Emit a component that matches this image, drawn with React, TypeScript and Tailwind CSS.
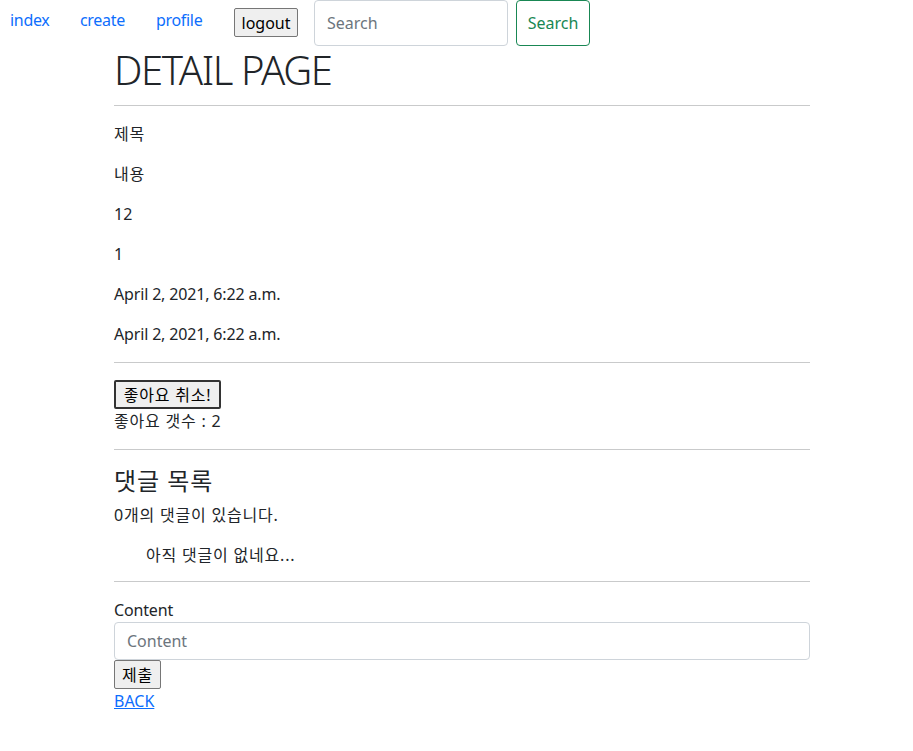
import React from 'react'

const font = { fontFamily: '"Segoe UI", "Noto Sans", "Noto Sans CJK KR", sans-serif' }

export default function App() {
  return (
    <div className="min-h-screen bg-white text-[16px] text-[#212529]" style={font}>
      {/* Top nav */}
      <nav className="flex items-start h-[46px]">
        <a href="#" className="ml-[10px] w-[70px] mt-[8px] leading-6 text-[#0d6efd] tracking-[-0.02em]">index</a>
        <a href="#" className="w-[76px] mt-[8px] leading-6 text-[#0d6efd] tracking-[-0.02em]">create</a>
        <a href="#" className="w-[78px] mt-[8px] leading-6 text-[#0d6efd] tracking-[-0.02em]">profile</a>
        <button className="w-[64px] mt-[8px] h-[29px] bg-[#efefef] border border-[#767676] rounded-[2px] text-black leading-none">
          logout
        </button>
        <input
          placeholder="Search"
          className="ml-[16px] w-[194px] h-[46px] px-3 border border-[#ced4da] rounded-[4px] placeholder:text-[#6c757d] outline-none"
        />
        <button className="ml-[8px] w-[74px] h-[46px] border border-[#198754] rounded-[4px] text-[#198754]">
          Search
        </button>
      </nav>

      <main className="ml-[114px] w-[696px]">
        <h1 className="text-[40px] leading-[48px] font-light tracking-[-0.035em]">DETAIL PAGE</h1>
        <hr className="mt-[11px] mb-4 border-t border-[#c9cacb]" />

        <p className="leading-6 mb-4 tracking-[0.05em]">제목</p>
        <p className="leading-6 mb-4 tracking-[0.05em]">내용</p>
        <p className="leading-6 mb-4">12</p>
        <p className="leading-6 mb-4">1</p>
        <p className="leading-6 mb-4 tracking-[-0.01em]">April 2, 2021, 6:22 a.m.</p>
        <p className="leading-6 mb-4 tracking-[-0.01em]">April 2, 2021, 6:22 a.m.</p>
        <hr className="mb-4 border-t border-[#c9cacb]" />

        <div>
          <button className="h-[29px] w-[107px] bg-[#efefef] border-2 border-[#333] rounded-[2px] text-black leading-none mt-px tracking-[0.05em]">
            좋아요 취소!
          </button>
        </div>
        <p className="leading-6 tracking-[0.05em]">좋아요 갯수 : 2</p>
        <hr className="mt-4 mb-4 border-t border-[#c9cacb]" />

        <h4 className="text-[24px] leading-[29px] font-normal mb-2 tracking-[0.04em]">댓글 목록</h4>
        <p className="leading-6 mb-4 tracking-[0.05em]">0개의 댓글이 있습니다.</p>
        <ul className="pl-8">
          <li className="leading-6 tracking-[0.05em]">아직 댓글이 없네요...</li>
        </ul>
        <hr className="mt-[14px] mb-4 border-t border-[#c9cacb]" />

        <form>
          <label className="block leading-6 tracking-[-0.01em]">Content</label>
          <input
            placeholder="Content"
            className="block w-full h-[38px] px-3 border border-[#ced4da] rounded-[4px] placeholder:text-[#6c757d] outline-none"
          />
          <button type="button" className="h-[29px] w-[47px] bg-[#efefef] border border-[#767676] rounded-[2px] text-black leading-none tracking-[0.05em]">
            제출
          </button>
        </form>
        <a href="#" className="block leading-6 text-[#0d6efd] underline w-fit">BACK</a>
      </main>
    </div>
  )
}
